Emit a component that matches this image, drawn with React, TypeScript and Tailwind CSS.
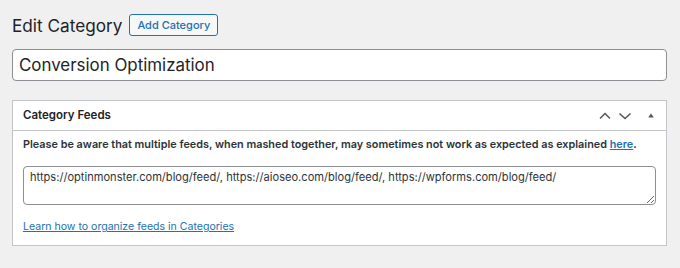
import { useState } from "react";

const font = { fontFamily: "Inter, 'Noto Sans', sans-serif" };

const App = () => {
  const [name, setName] = useState("Conversion Optimization");
  const [feeds, setFeeds] = useState(
    "https://optinmonster.com/blog/feed/, https://aioseo.com/blog/feed/, https://wpforms.com/blog/feed/"
  );

  return (
    <div
      className="h-[268px] w-[680px] bg-[#f0f0f1] pl-3 pr-[13px] pt-[14px] text-[#1d2327]"
      style={font}
    >
      <div className="flex h-[21px] items-center gap-[7px]">
        <h1 className="pt-[2px] text-[17.2px] leading-[21px] font-normal">Edit Category</h1>
        <button className="h-[22px] rounded-[3px] border border-[#2271b1] bg-[#f6f7f7] px-[7px] text-[11px] leading-[20px] font-medium text-[#2271b1]">
          Add Category
        </button>
      </div>

      <input
        value={name}
        onChange={(e) => setName(e.target.value)}
        className="mt-[14px] block h-[32px] w-full rounded-[4px] border border-[#8c8f94] bg-white px-[6px] text-[16.9px] text-[#1d2327] outline-none"
      />

      <div className="mt-[19px] border border-[#c3c4c7] bg-white">
        <div className="flex h-[30px] items-center justify-between border-b border-[#c3c4c7] pl-[10px] pr-[12px]">
          <h2 className="pt-[1px] text-[11.5px] font-semibold">Category Feeds</h2>
          <div className="flex items-center text-[#50575e]">
            <svg width="14" height="10" viewBox="0 0 14 10" className="mr-[6px]">
              <path d="M2 7.5 L7 2.5 L12 7.5" fill="none" stroke="currentColor" strokeWidth="1.5" />
            </svg>
            <svg width="14" height="10" viewBox="0 0 14 10" className="mr-[16px]">
              <path d="M1.5 2.5 L7 7.5 L12.5 2.5" fill="none" stroke="currentColor" strokeWidth="1.5" />
            </svg>
            <svg width="6" height="8" viewBox="0 0 6 8">
              <path d="M3 1.5 L5.8 5.5 L0.2 5.5 Z" fill="currentColor" />
            </svg>
          </div>
        </div>

        <div className="px-[10px] pb-[9px] pt-[3px]">
          <p className="text-[10.85px] leading-[20px] font-semibold whitespace-nowrap text-[#2c3338]">
            Please be aware that multiple feeds, when mashed together, may sometimes
            not work as expected as explained{" "}
            <a href="#" className="text-[#2271b1] underline">
              here
            </a>
            .
          </p>

          <textarea
            value={feeds}
            onChange={(e) => setFeeds(e.target.value)}
            className="mt-[12px] block h-[39px] w-full rounded-[4px] border border-[#8c8f94] bg-white px-[6px] pt-[2px] text-[11.1px] leading-[16px] text-[#2c3338] outline-none"
          />

          <a
            href="#"
            className="mt-[13px] block text-[10.55px] leading-[18px] text-[#2271b1] underline"
          >
            Learn how to organize feeds in Categories
          </a>
        </div>
      </div>
    </div>
  );
};

export default App;
